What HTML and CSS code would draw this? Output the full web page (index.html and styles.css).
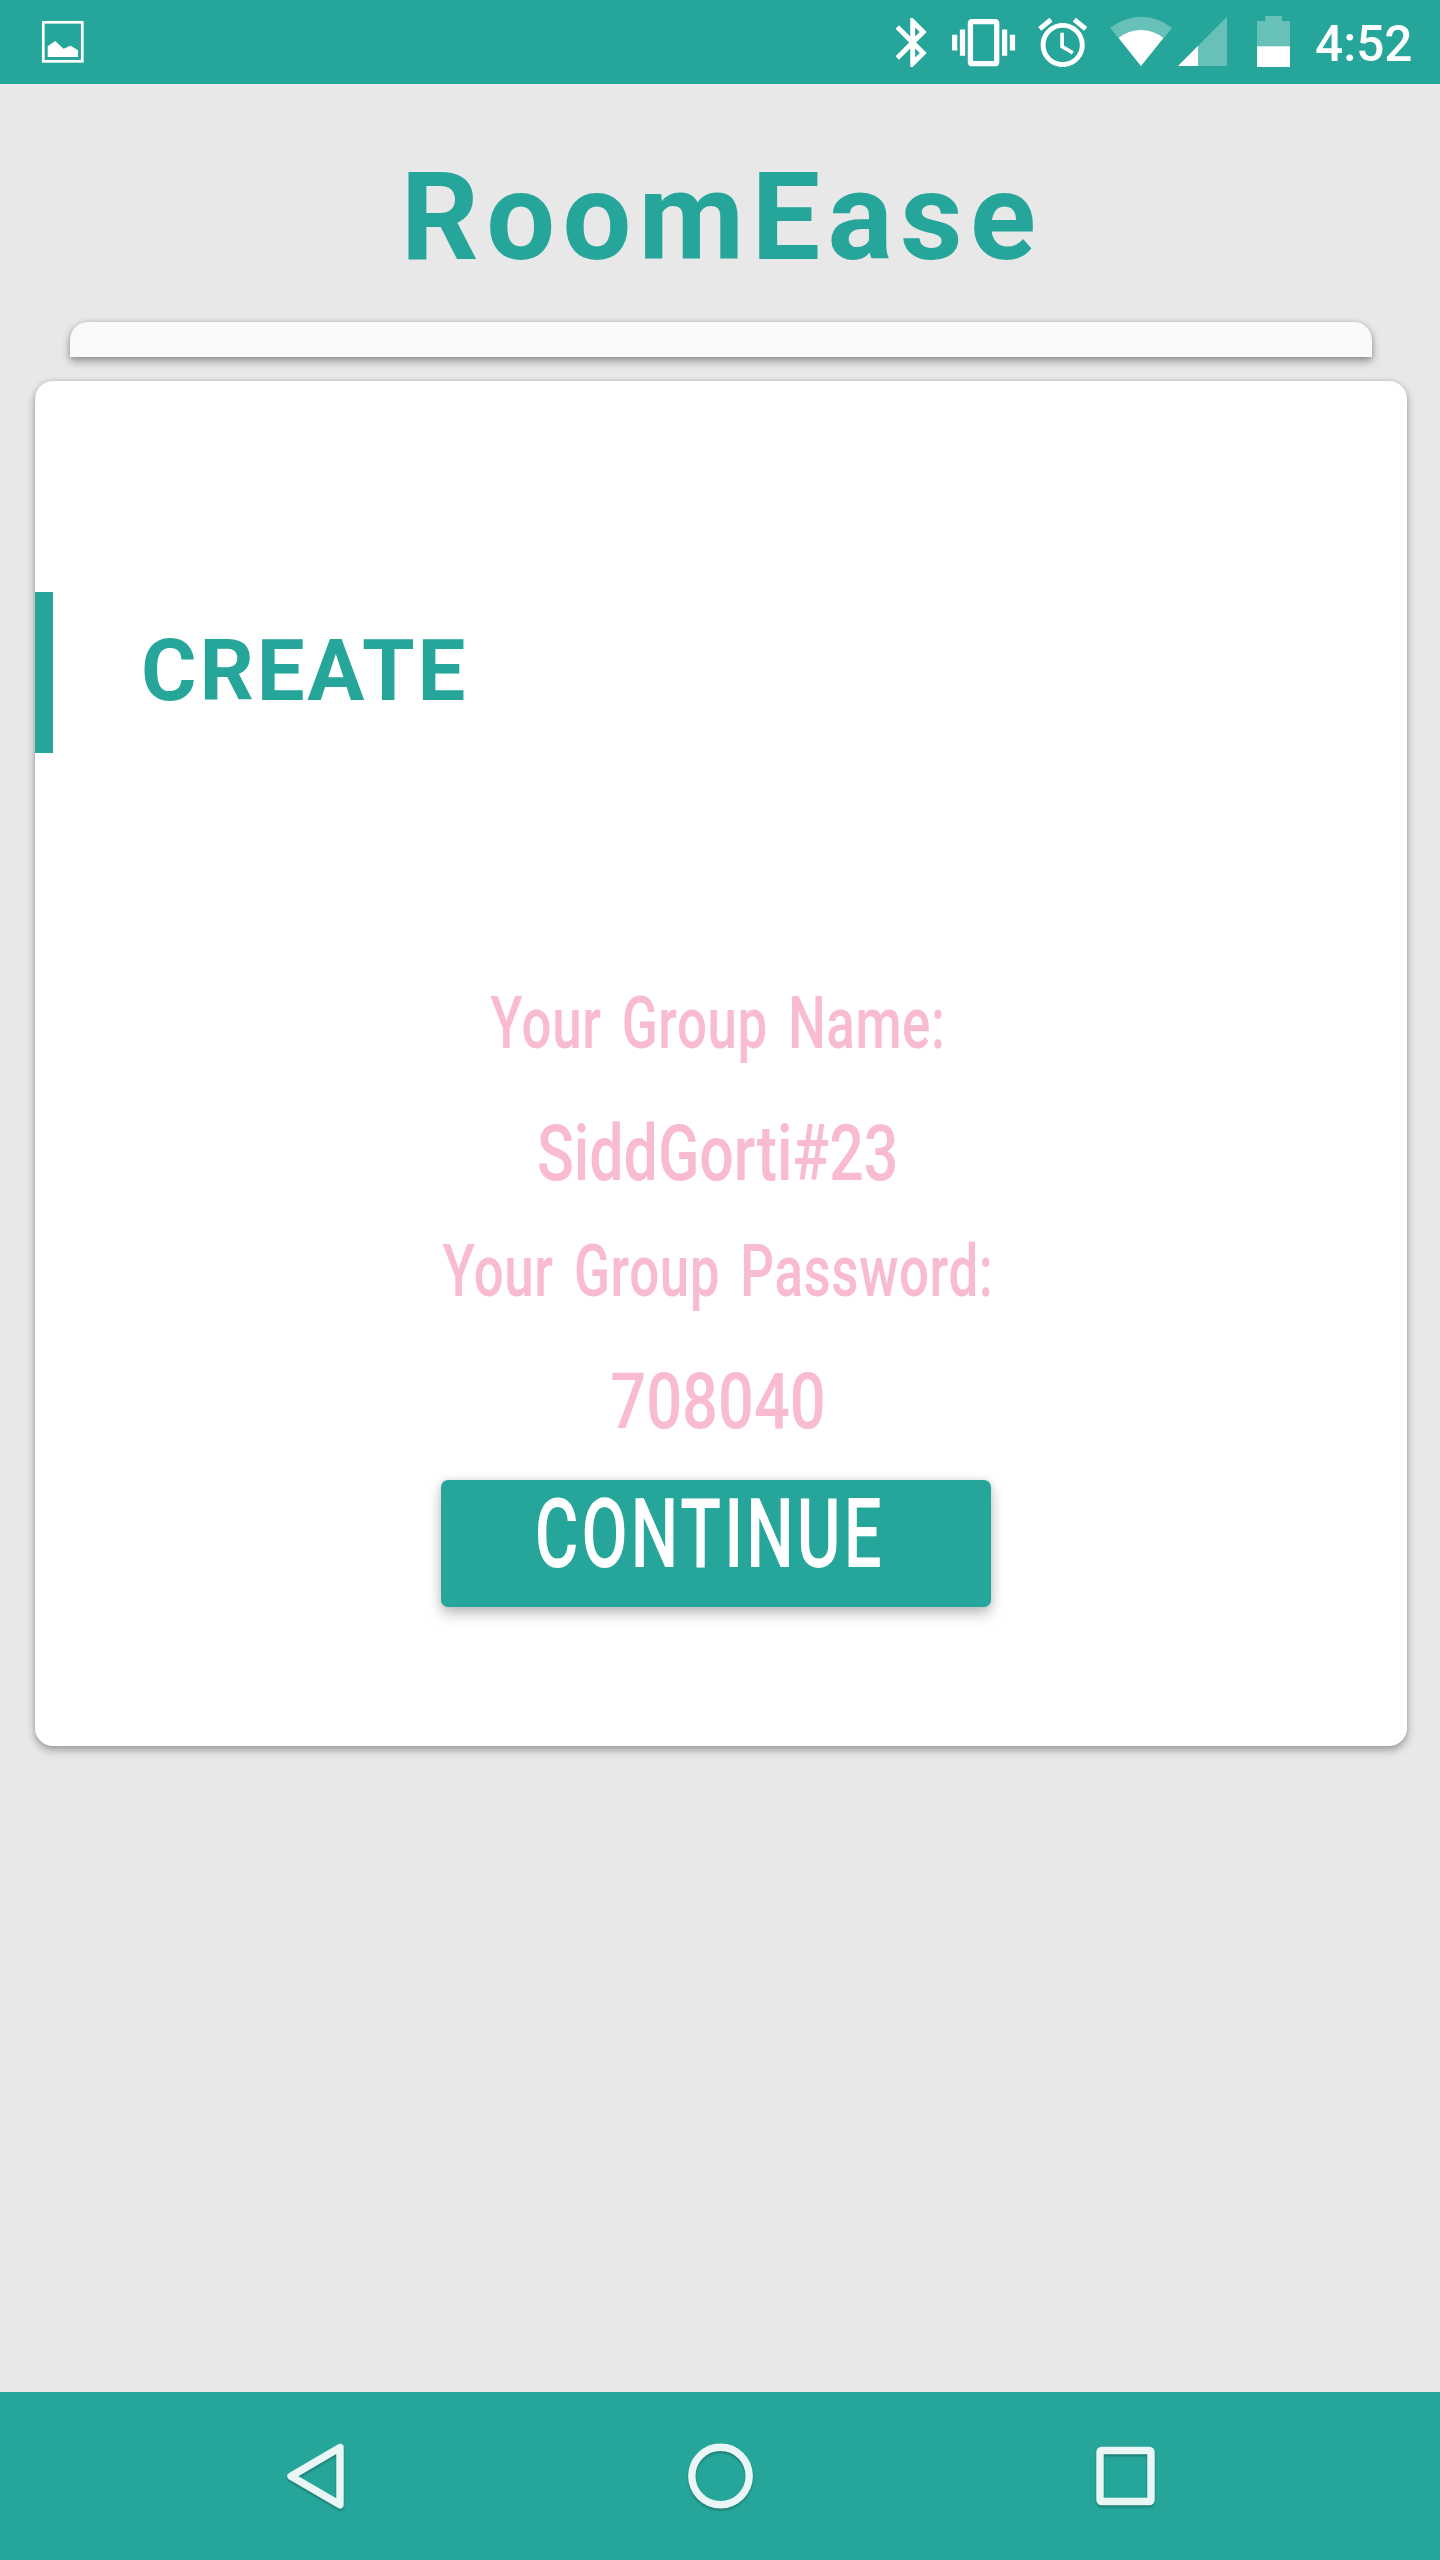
FILE: index.html
```html
<!DOCTYPE html>
<html lang="en">
<head>
<meta charset="utf-8">
<title>RoomEase</title>
<link rel="stylesheet" href="styles.css">
</head>
<body>
<header class="status-bar">
  <svg class="icon" width="50" height="84" viewBox="38 0 50 84" fill="#fff">
    <rect x="43.3" y="22.3" width="39" height="39" fill="none" stroke="#fff" stroke-width="2.7"/>
    <path d="M47.7 57V46.3l7.5-5.3 8.3 7.7 7-3 7.5 4.6V57z"/>
  </svg>
  <div class="status-icons">
    <svg class="icon" width="306" height="84" viewBox="890 0 306 84" fill="#fff">
      <path transform="translate(883.3 13.1) scale(2.45)" d="M17.71 7.71L12 2h-1v7.59L6.41 5 5 6.41 10.59 12 5 17.59 6.41 19 11 14.41V22h1l5.71-5.71-4.3-4.29 4.3-4.29zM13 5.83l1.88 1.88L13 9.59V5.83zm1.88 10.46L13 18.17v-3.76l1.88 1.88z"/>
      <path transform="translate(952 11.1) scale(2.63)" d="M0 15h2V9H0v6zm3 2h2V7H3v10zm19-8v6h2V9h-2zm-3 8h2V7h-2v10zM16.5 3h-9C6.67 3 6 3.67 6 4.5v15c0 .83.67 1.5 1.5 1.5h9c.83 0 1.5-.67 1.5-1.5v-15c0-.83-.67-1.5-1.5-1.5zM16 19H8V5h8v14z"/>
      <path transform="translate(1033.3 13.1) scale(2.45)" d="M22 5.72l-4.6-3.86-1.29 1.53 4.6 3.86L22 5.72zM7.88 3.39L6.6 1.86 2 5.71l1.29 1.53 4.59-3.85zM12.5 8H11v6l4.75 2.85.75-1.23-4-2.37V8zM12 4c-4.97 0-9 4.03-9 9s4.02 9 9 9c4.97 0 9-4.03 9-9s-4.03-9-9-9zm0 16c-3.87 0-7-3.13-7-7s3.13-7 7-7 7 3.13 7 7-3.13 7-7 7z"/>
      <path fill-opacity=".3" d="M1141 66L1110.3 28A48 48 0 0 1 1172 28z"/>
      <path d="M1141 66L1118.7 38A35 35 0 0 1 1163.3 38z"/>
    </svg>
    <svg class="icon signal" width="114" height="84" viewBox="1178 0 114 84" fill="#fff">
      <path fill-opacity=".3" d="M1178 66L1227 16.7V66z"/>
      <path d="M1178 66l20-20v20z"/>
      <path fill-opacity=".3" d="M1257 21h8.3v-5H1282v5h8v25.3h-33z"/>
      <path d="M1257 46.3h33V67h-33z"/>
    </svg>
    <time class="clock">4:52</time>
  </div>
</header>
<main class="screen">
  <h1 class="title">RoomEase</h1>
  <div class="stack-edge"></div>
  <section class="card">
    <h2 class="card-title">CREATE</h2>
    <div class="details">
      <p class="label"><span class="label-text">Your Group Name:</span></p>
      <p class="value"><span class="name-text">SiddGorti#23</span></p>
      <p class="label"><span class="label-text">Your Group Password:</span></p>
      <p class="value"><span class="code-text">708040</span></p>
      <button class="continue"><span class="continue-text">CONTINUE</span></button>
    </div>
  </section>
</main>
<nav class="nav-bar">
  <svg class="nav-icon" width="80" height="80" viewBox="276 2436.5 80 80"><path d="M340 2448L291 2476.8 340 2505.3z"/></svg>
  <svg class="nav-icon" width="80" height="80" viewBox="681 2436.5 80 80"><circle cx="720.5" cy="2476.5" r="28.7"/></svg>
  <svg class="nav-icon" width="80" height="80" viewBox="1086 2436.5 80 80"><rect x="1100" y="2451" width="51" height="51" rx="1.5"/></svg>
</nav>
</body>
</html>
```
FILE: styles.css
```css
* { box-sizing: border-box; }
body {
  margin: 0;
  height: 2560px;
  display: flex;
  flex-direction: column;
  background: #e8e8e8;
  color: #26a69a;
  font-family: Roboto, "Liberation Sans", sans-serif;
}
h1, h2, p { margin: 0; }
.status-bar {
  height: 84px;
  padding: 0 28px 0 38px;
  display: flex;
  justify-content: space-between;
  background: #26a69a;
  color: #fff;
}
.icon { display: block; flex: none; }
.status-icons { display: flex; }
.signal { margin-left: -18px; }
.clock {
  width: 97px;
  margin-left: 23px;
  font-size: 49.5px;
  font-weight: 500;
  line-height: 88px;
  white-space: nowrap;
}
.screen { flex: 1; }
.title {
  height: 238px;
  padding-left: 4px;
  font-size: 122px;
  font-weight: 700;
  line-height: 268px;
  letter-spacing: 7.3px;
  text-align: center;
}
.stack-edge {
  height: 35px;
  margin: 0 68px 24px 70px;
  background: #fafafa;
  border-radius: 18px 18px 0 0;
  box-shadow: 0 4px 9px rgba(0, 0, 0, .38), 0 0 4px rgba(0, 0, 0, .12);
}
.card {
  width: 1372px;
  height: 1365px;
  margin-left: 35px;
  padding-top: 211px;
  background: #fff;
  border-radius: 18px;
  box-shadow: 0 4px 8px rgba(0, 0, 0, .32), 0 0 4px rgba(0, 0, 0, .12);
}
.card-title {
  height: 161px;
  padding-left: 88px;
  border-left: 18px solid #26a69a;
  font-size: 85px;
  font-weight: 700;
  line-height: 159px;
  letter-spacing: 2.8px;
}
.details {
  display: flex;
  flex-direction: column;
  align-items: center;
  padding: 220px 10px 0 0;
  color: #f8bbd0;
  font-weight: 500;
}
.label, .value {
  height: 100px;
  padding-left: 4px;
  line-height: 100px;
  white-space: nowrap;
}
.label { font-size: 73px; }
.value { font-size: 78px; margin: 31px 0 17px; }
.label-text, .name-text, .code-text, .continue-text { display: inline-block; }
.label-text { transform: scaleX(.725); letter-spacing: .8px; word-spacing: 9px; }
.name-text { transform: scaleX(.78); }
.code-text { transform: scaleX(.81); }
.continue {
  width: 550px;
  height: 127px;
  margin-top: 11px;
  padding: 0 12px 18px 0;
  border: 0;
  border-radius: 7px;
  background: #26a69a;
  color: #fff;
  font: 500 97px/109px Roboto, "Liberation Sans", sans-serif;
  box-shadow: 0 7px 14px rgba(0, 0, 0, .24), 0 0 10px rgba(0, 0, 0, .1);
}
.continue-text { transform: scaleX(.69); margin: 0 -60px; letter-spacing: 4.5px; }
.nav-bar {
  height: 168px;
  padding: 0 274px 0 276px;
  display: flex;
  align-items: center;
  justify-content: space-between;
  background: #26a69a;
}
.nav-icon {
  fill: none;
  stroke: #e9f6f5;
  stroke-width: 7.4;
  stroke-linejoin: round;
  filter: drop-shadow(0 2px 1px rgba(0, 0, 0, .25));
}
```
